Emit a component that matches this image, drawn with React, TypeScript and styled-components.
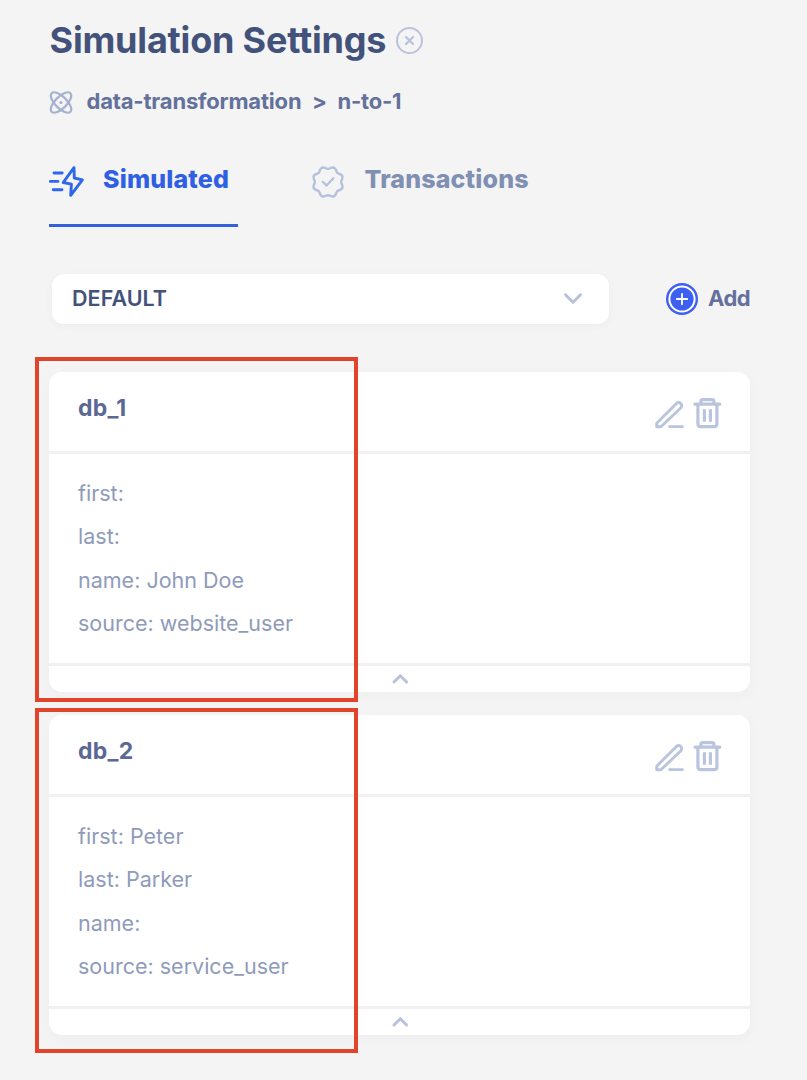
import React from 'react';
import styled, { createGlobalStyle } from 'styled-components';

const GlobalStyle = createGlobalStyle`
  * { box-sizing: border-box; }
  body {
    margin: 0;
    background: #f4f4f4;
    font-family: Inter, "Liberation Sans", sans-serif;
  }
`;

const Page = styled.main`
  width: 807px;
  min-height: 1080px;
  padding: 16px 57px 0 49px;
  background: #f4f4f4;
`;

const TitleRow = styled.header`
  display: flex;
  align-items: center;
  height: 48px;
`;

const Title = styled.h1`
  margin: 0;
  width: 346px;
  padding-left: 0.5px;
  font-size: 36px;
  line-height: 48px;
  font-weight: 700;
  letter-spacing: -0.19px;
  color: #43527b;
  white-space: nowrap;
`;

const IconButton = styled.button`
  display: flex;
  padding: 0;
  border: 0;
  background: none;
`;

const Breadcrumb = styled.nav`
  display: flex;
  align-items: center;
  height: 30px;
  margin-top: 22px;
  font-size: 22px;
  font-weight: 700;
  letter-spacing: -0.18px;
  color: #63719c;
  white-space: nowrap;
`;

const BreadcrumbIcon = styled.span`
  display: flex;
  width: 37.5px;
  flex: none;
  padding-top: 4px;
`;

const Separator = styled.span`
  width: 36px;
  text-align: center;
`;

const Tabs = styled.div`
  display: flex;
  gap: 73px;
  height: 77px;
  margin-top: 34px;
`;

const Tab = styled.div<{ $active?: boolean }>`
  display: flex;
  align-items: flex-start;
  width: ${(p) => (p.$active ? 189 : 220)}px;
  height: 77px;
  padding-top: 12px;
  border-bottom: 3px solid ${(p) => (p.$active ? '#3560dc' : 'transparent')};
  color: ${(p) => (p.$active ? '#2f5fe3' : '#8090b3')};
`;

const TabIcon = styled.span<{ $width: number }>`
  display: flex;
  width: ${(p) => p.$width}px;
  flex: none;
  padding-top: 3px;
`;

const TabLabel = styled.span`
  font-size: 25px;
  line-height: 35px;
  font-weight: 800;
  letter-spacing: 0.15px;
  white-space: nowrap;
`;

const Toolbar = styled.div`
  display: flex;
  align-items: center;
  margin: 47px 0 48px 3px;
  height: 50px;
`;

const Select = styled.div`
  display: flex;
  flex: none;
  align-items: center;
  justify-content: space-between;
  width: 557px;
  height: 50px;
  padding: 0 26px 2px 20px;
  border-radius: 12px;
  background: #fff;
  box-shadow: 0 2px 8px rgba(60, 70, 110, 0.04);
  font-size: 21.5px;
  font-weight: 600;
  letter-spacing: 0.05px;
  color: #43527b;
`;

const AddButton = styled.button`
  display: flex;
  align-items: center;
  gap: 10px;
  margin-left: 57px;
  padding: 0;
  border: 0;
  background: none;
  font: 700 22px Inter, sans-serif;
  letter-spacing: -0.5px;
  color: #63719c;
  white-space: nowrap;
`;

const AddLabel = styled.span`
  padding-bottom: 2px;
`;

const CardList = styled.section`
  display: flex;
  flex-direction: column;
  gap: 23px;
`;

const CardWrap = styled.div`
  position: relative;
`;

const Card = styled.article`
  height: 320px;
  border-radius: 13px;
  background: #fff;
  box-shadow: 0 4px 14px rgba(60, 70, 110, 0.03);
`;

const CardHeader = styled.div`
  display: flex;
  justify-content: space-between;
  height: 82px;
  padding: 20px 27px 0 29px;
  border-bottom: 3px solid #f1f1f3;
`;

const CardTitle = styled.h2`
  margin: 0;
  font-size: 23px;
  line-height: 32px;
  font-weight: 700;
  letter-spacing: 0.3px;
  color: #5b6894;
`;

const Actions = styled.div`
  display: flex;
  gap: 8px;
  padding-top: 5px;
`;

const Fields = styled.div`
  height: 209px;
  padding: 18px 29px 0;
`;

const Field = styled.div`
  height: 43.33px;
  font-size: 21.5px;
  line-height: 43.33px;
  letter-spacing: 0;
  color: #8f9bba;
  white-space: nowrap;
`;

const CardFooter = styled.div`
  display: flex;
  justify-content: center;
  height: 29px;
  padding-top: 6px;
  border-top: 3px solid #f1f1f3;
`;

const Highlight = styled.div<{ $top: number }>`
  position: absolute;
  left: -14px;
  top: ${(p) => p.$top}px;
  width: 323px;
  height: 345px;
  border: 4px solid #e0452c;
  pointer-events: none;
`;

const stroke = { fill: 'none', strokeLinecap: 'round', strokeLinejoin: 'round' } as const;

const CloseIcon = () => (
  <svg width="28" height="28" viewBox="0 0 28 28" {...stroke} stroke="#bac3dc" strokeWidth="2">
    <circle cx="14.5" cy="14.5" r="12.5" />
    <path d="M11 11l7 7M18 11l-7 7" strokeWidth="2.4" />
  </svg>
);

const AtomIcon = () => (
  <svg width="25" height="24" viewBox="0 0 25 24" {...stroke} stroke="#a5b1cf" strokeWidth="2.2">
    <ellipse cx="12" cy="11.5" rx="13.2" ry="5.8" transform="rotate(45 12 11.5)" />
    <ellipse cx="12" cy="11.5" rx="13.2" ry="5.8" transform="rotate(-45 12 11.5)" />
    <circle cx="12" cy="11.5" r="1.6" fill="#a5b1cf" stroke="none" />
  </svg>
);

const BoltIcon = () => (
  <svg width="36" height="34" viewBox="0 0 36 34" {...stroke} stroke="#2f66ee" strokeWidth="2.9">
    <path d="M25 2.6L14.2 17.5L22.4 19.2L21.7 30.3L33.4 14.8L25.3 13Z" />
    <path d="M5 8h8.2M1.4 16.4h7.6M4.2 24.8h8.8" />
  </svg>
);

const sealPath = (() => {
  const points: string[] = [];
  for (let i = 0; i < 96; i++) {
    const a = (i / 96) * Math.PI * 2;
    const r = 14.3 - Math.cos(a * 8) * 1.15;
    points.push(`${(17 + r * Math.cos(a)).toFixed(2)} ${(17 + r * Math.sin(a)).toFixed(2)}`);
  }
  return `M${points.join('L')}Z`;
})();

const SealIcon = () => (
  <svg width="34" height="34" viewBox="0 0 34 34" {...stroke} stroke="#b5c0db" strokeWidth="2.4">
    <path d={sealPath} />
    <path d="M11.8 16.8l3.8 3.8l6.8-7.4" strokeWidth="2.2" />
  </svg>
);

const ChevronDown = () => (
  <svg width="20" height="14" viewBox="0 0 20 14" {...stroke} stroke="#b7c1da" strokeWidth="3">
    <path d="M2.5 3.8L10 11.3L17.5 3.8" />
  </svg>
);

const ChevronUp = () => (
  <svg width="18" height="14" viewBox="0 0 18 14" {...stroke} stroke="#b9c1db" strokeWidth="3">
    <path d="M3 10L9.3 3.7L15.6 10" />
  </svg>
);

const PlusCircle = () => (
  <svg width="32" height="32" viewBox="0 0 32 32" {...stroke}>
    <circle cx="16" cy="16" r="16" fill="#3d5ff2" />
    <circle cx="16" cy="16" r="12.6" stroke="#fff" strokeWidth="2" />
    <path d="M10.8 16h10.4M16 10.8v10.4" stroke="#fff" strokeWidth="1.8" />
  </svg>
);

const PencilIcon = () => (
  <svg width="30" height="32" viewBox="0 0 30 32" {...stroke} stroke="#bbc4dd" strokeWidth="2.9">
    <path d="M1.7 29.7V26.2L21.4 6.5Q23.8 4.6 25.8 6.5Q27.6 8.5 25.9 10.8L6 29.7Z" />
    <path d="M14.6 29.6h12.8" />
  </svg>
);

const TrashIcon = () => (
  <svg width="30" height="32" viewBox="0 0 30 32" {...stroke} stroke="#bbc4dd" strokeWidth="3.2">
    <path d="M2 7.2h24.8M7.9 7V4.4q0-1.8 1.8-1.8h9.4q1.8 0 1.8 1.8V7M4.9 8v18.8q0 2.8 2.8 2.8h13.4q2.8 0 2.8-2.8V8" />
    <path d="M11.4 12.3v12.4M17.4 12.3v12.4" strokeLinecap="butt" />
  </svg>
);

const cards = [
  { name: 'db_1', top: -15, fields: ['first:', 'last:', 'name: John Doe', 'source: website_user'] },
  { name: 'db_2', top: -7, fields: ['first: Peter', 'last: Parker', 'name:', 'source: service_user'] },
];

export default function App() {
  return (
    <Page>
      <GlobalStyle />
      <TitleRow>
        <Title>Simulation Settings</Title>
        <IconButton aria-label="Close"><CloseIcon /></IconButton>
      </TitleRow>
      <Breadcrumb>
        <BreadcrumbIcon><AtomIcon /></BreadcrumbIcon>
        <span>data-transformation</span>
        <Separator>&gt;</Separator>
        <span>n-to-1</span>
      </Breadcrumb>
      <Tabs>
        <Tab $active>
          <TabIcon $width={54}><BoltIcon /></TabIcon>
          <TabLabel>Simulated</TabLabel>
        </Tab>
        <Tab>
          <TabIcon $width={53.5}><SealIcon /></TabIcon>
          <TabLabel>Transactions</TabLabel>
        </Tab>
      </Tabs>
      <Toolbar>
        <Select>
          <span>DEFAULT</span>
          <ChevronDown />
        </Select>
        <AddButton><PlusCircle /><AddLabel>Add</AddLabel></AddButton>
      </Toolbar>
      <CardList>
        {cards.map((card) => (
          <CardWrap key={card.name}>
            <Card>
              <CardHeader>
                <CardTitle>{card.name}</CardTitle>
                <Actions>
                  <IconButton aria-label="Edit"><PencilIcon /></IconButton>
                  <IconButton aria-label="Delete"><TrashIcon /></IconButton>
                </Actions>
              </CardHeader>
              <Fields>
                {card.fields.map((field) => <Field key={field}>{field}</Field>)}
              </Fields>
              <CardFooter><ChevronUp /></CardFooter>
            </Card>
            <Highlight $top={card.top} />
          </CardWrap>
        ))}
      </CardList>
    </Page>
  );
}
